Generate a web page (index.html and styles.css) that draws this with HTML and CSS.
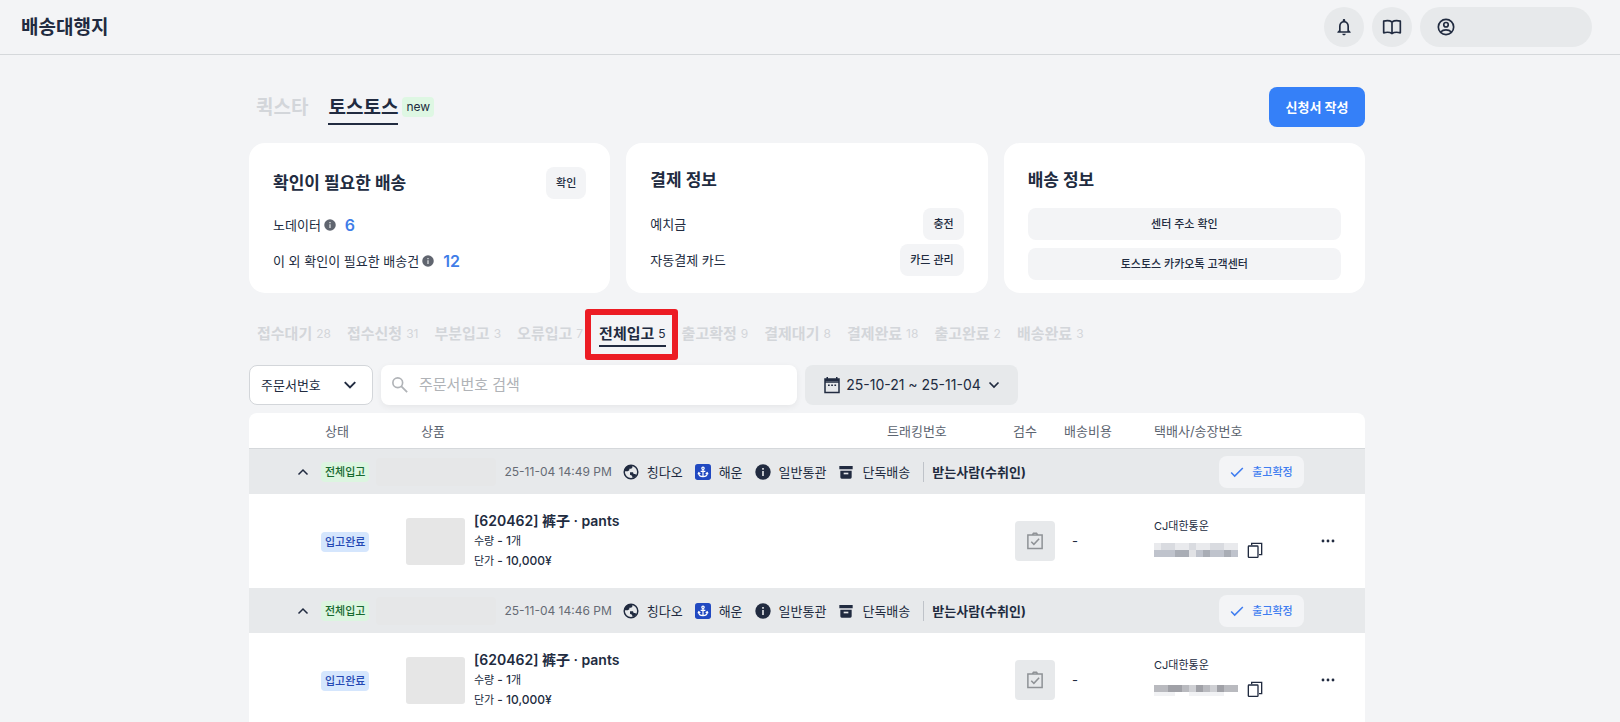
FILE: index.html
```html
<!DOCTYPE html>
<html lang="ko">
<head>
    <meta charset="UTF-8">
    <meta name="viewport" content="width=device-width, initial-scale=1.0">
    <title>배송대행지</title>
    <link rel="stylesheet" href="styles.css">
</head>
<body>
    <!-- Shared icons -->
    <svg class="sprite" aria-hidden="true">
        <symbol id="i-up" viewBox="0 0 24 24"><path d="M3 17l9-9 9 9" fill="none" stroke="currentColor" stroke-width="3"/></symbol>
        <symbol id="i-down" viewBox="0 0 24 24"><path d="M3 7l9 9 9-9" fill="none" stroke="currentColor" stroke-width="3.400"/></symbol>
        <symbol id="i-info" viewBox="0 0 24 24"><circle cx="12" cy="12" r="11.500" fill="currentColor"/><path d="M10.800 6h2.400v2.600h-2.400zM10.800 10.500h2.400V18h-2.400z" fill="#e7e9eb"/></symbol>
        <symbol id="i-globe" viewBox="0 0 24 24"><circle cx="12" cy="12" r="10.200" fill="none" stroke="currentColor" stroke-width="2.200"/><path d="M2 11c0-5 4-9 9-9.500l3 .5v3c0 1.500-1 2-2.500 2H9.500v2.500L7 11zM10.500 12.500h4.500l1 2.500h2.500l1.500 2c-1.500 2-3.500 3.500-5.500 4l-1-3.500-3-1.500z" fill="currentColor"/></symbol>
        <symbol id="i-anchor" viewBox="0 0 24 24"><rect width="24" height="24" rx="4" fill="#2149c1"/><g fill="none" stroke="#fff" stroke-width="1.800"><circle cx="12" cy="6.500" r="1.800"/><path d="M12 8.300V19M8.500 11h7M5.500 13.500c0 3.500 3 5.500 6.500 5.500s6.500-2 6.500-5.500M4.500 15.500l1.200-2.500 2.300 1.500M19.500 15.500l-1.200-2.500-2.300 1.500"/></g></symbol>
        <symbol id="i-box" viewBox="0 0 24 24"><path d="M2 3h20v5H2zM3.500 10h17v10a2 2 0 0 1-2 2h-13a2 2 0 0 1-2-2z" fill="currentColor"/><path d="M8.500 13h7v2.500h-7z" fill="#e7e9eb"/></symbol>
        <symbol id="i-check" viewBox="0 0 24 24"><path d="M2 13l6 6L22 5" fill="none" stroke="currentColor" stroke-width="2.600"/></symbol>
        <symbol id="i-task" viewBox="0 0 24 24"><path d="M2.500 4h19v18h-19zM8.500 4l1.500-2.500h4L15.500 4" fill="none" stroke="currentColor" stroke-width="2"/><path d="M7 13l3.500 3.500L17.500 9" fill="none" stroke="currentColor" stroke-width="2"/></symbol>
        <symbol id="i-copy" viewBox="0 0 24 24"><rect x="2" y="6" width="14.500" height="17" rx="1" fill="none" stroke="currentColor" stroke-width="2"/><path d="M7 5V2h15v17h-4" fill="none" stroke="currentColor" stroke-width="2"/></symbol>
        <symbol id="i-more" viewBox="0 0 24 24"><g fill="currentColor"><circle cx="6" cy="12" r="1.700"/><circle cx="12" cy="12" r="1.700"/><circle cx="18" cy="12" r="1.700"/></g></symbol>
    </svg>

    <header class="topbar">
        <h1 class="brand">배송대행지</h1>
        <div class="top-actions">
            <button class="round" aria-label="알림">
                <svg class="icon-20" viewBox="0 0 24 24"><path fill="currentColor" d="M12 22c1.100 0 2-.9 2-2h-4c0 1.100.9 2 2 2zm6-6v-5c0-3.070-1.630-5.640-4.500-6.320V4c0-.83-.67-1.500-1.500-1.500s-1.500.67-1.500 1.500v.68C7.640 5.360 6 7.920 6 11v5l-2 2v1h16v-1l-2-2zm-2 1H8v-6c0-2.480 1.510-4.500 4-4.500s4 2.020 4 4.500v6z"/></svg>
            </button>
            <button class="round" aria-label="가이드">
                <svg class="icon-20" viewBox="0 0 24 24"><path fill="none" stroke="currentColor" stroke-width="2" stroke-linejoin="round" d="M12 6C9.500 4.300 5 4.300 2 5v14c3-.8 7.500-.8 10 .8V6c2.500-1.700 7-1.700 10-1v14c-3-.8-7.500-.8-10 .8"/></svg>
            </button>
            <button class="profile" aria-label="내 계정">
                <svg class="icon-20" viewBox="0 0 24 24"><g fill="none" stroke="currentColor" stroke-width="2"><circle cx="12" cy="12" r="9.200"/><circle cx="12" cy="9.300" r="2.700"/><path d="M5.500 18c3.500-3.300 9.500-3.300 13 0"/></g></svg>
            </button>
        </div>
    </header>

    <main class="page">
        <div class="container">
            <div class="service-row">
                <nav class="services">
                    <a href="#" class="service">퀵스타</a>
                    <a href="#" class="service active">토스토스</a>
                    <span class="new">new</span>
                </nav>
                <button class="primary">신청서 작성</button>
            </div>

            <section class="cards">
                <div class="card">
                    <div class="card-head">
                        <h2>확인이 필요한 배송</h2>
                        <button class="soft">확인</button>
                    </div>
                    <div class="check-line">노데이터<svg class="icon-12"><use href="#i-info"/></svg><b>6</b></div>
                    <div class="check-line">이 외 확인이 필요한 배송건<svg class="icon-12"><use href="#i-info"/></svg><b>12</b></div>
                </div>
                <div class="card">
                    <h2>결제 정보</h2>
                    <div class="pay-lines">
                        <div class="pay-line">예치금<button class="soft">충전</button></div>
                        <div class="pay-line">자동결제 카드<button class="soft">카드 관리</button></div>
                    </div>
                </div>
                <div class="card">
                    <h2>배송 정보</h2>
                    <div class="ship-buttons">
                        <button class="soft">센터 주소 확인</button>
                        <button class="soft">토스토스 카카오톡 고객센터</button>
                    </div>
                </div>
            </section>

            <nav class="status-tabs">
                <a href="#">접수대기<span>28</span></a>
                <a href="#">접수신청<span>31</span></a>
                <a href="#">부분입고<span>3</span></a>
                <a href="#">오류입고<span>7</span></a>
                <a href="#" class="active">전체입고<span>5</span></a>
                <a href="#">출고확정<span>9</span></a>
                <a href="#">결제대기<span>8</span></a>
                <a href="#">결제완료<span>18</span></a>
                <a href="#">출고완료<span>2</span></a>
                <a href="#">배송완료<span>3</span></a>
            </nav>

            <div class="filters">
                <div class="select-box">
                    <select aria-label="검색 기준">
                        <option>주문서번호</option>
                    </select>
                    <svg class="icon-14"><use href="#i-down"/></svg>
                </div>
                <label class="search">
                    <svg class="icon-18" viewBox="0 0 24 24"><path fill="none" stroke="currentColor" stroke-width="2.400" d="M13.500 13.500l8 8"/><circle cx="9" cy="9" r="6.500" fill="none" stroke="currentColor" stroke-width="2.200"/></svg>
                    <input type="text" placeholder="주문서번호 검색" aria-label="주문서번호 검색">
                </label>
                <button class="period">
                    <svg class="icon-18" viewBox="0 0 18 18"><path fill="none" stroke="currentColor" stroke-width="1.500" d="M2 3h14v13.500H2zM2 6h14"/><path fill="currentColor" d="M2 3h14v2H2zM3.500 1H5v2H3.500zM13 1h1.500v2H13zM5 8.500h1.700V10H5zM8.200 8.500h1.700V10H8.200zM11.400 8.500h1.700V10h-1.700z"/></svg>
                    25-10-21 ~ 25-11-04
                    <svg class="icon-12"><use href="#i-down"/></svg>
                </button>
            </div>

            <table class="orders">
                <colgroup>
                    <col class="c-toggle"><col class="c-status"><col><col class="c-track">
                    <col class="c-inspect"><col class="c-cost"><col class="c-carrier"><col class="c-more">
                </colgroup>
                <thead>
                    <tr>
                        <th></th>
                        <th class="th-status">상태</th>
                        <th class="th-product">상품</th>
                        <th>트래킹번호</th>
                        <th class="th-inspect">검수</th>
                        <th class="th-cost">배송비용</th>
                        <th>택배사/송장번호</th>
                        <th></th>
                    </tr>
                </thead>
                <tbody>
                    <tr class="group">
                        <td colspan="8">
                            <div class="group-line">
                                <button class="toggle" aria-label="접기"><svg class="icon-12"><use href="#i-up"/></svg></button>
                                <span class="badge green">전체입고</span>
                                <span class="masked"></span>
                                <span class="date">25-11-04 14:49 PM</span>
                                <span class="tag"><svg class="icon-16"><use href="#i-globe"/></svg>칭다오</span>
                                <span class="tag"><svg class="icon-16"><use href="#i-anchor"/></svg>해운</span>
                                <span class="tag"><svg class="icon-16"><use href="#i-info"/></svg>일반통관</span>
                                <span class="tag"><svg class="icon-16"><use href="#i-box"/></svg>단독배송</span>
                                <span class="receiver">받는사람(수취인)</span>
                                <button class="confirm"><svg class="icon-14"><use href="#i-check"/></svg>출고확정</button>
                            </div>
                        </td>
                    </tr>
                    <tr class="item">
                        <td></td>
                        <td><span class="badge blue">입고완료</span></td>
                        <td>
                            <div class="product">
                                <div class="thumb"></div>
                                <div>
                                    <strong>[620462] 裤子 · pants</strong>
                                    <p>수량 <b>- 1</b>개</p>
                                    <p>단가 <b>- 10,000¥</b></p>
                                </div>
                            </div>
                        </td>
                        <td></td>
                        <td class="center"><button class="inspect" aria-label="검수"><svg class="icon-18"><use href="#i-task"/></svg></button></td>
                        <td>-</td>
                        <td>
                            <div class="carrier">CJ대한통운</div>
                            <div class="invoice">
                                <svg class="mosaic" viewBox="0 0 84 14"><path fill="#e9eaed" d="M0 0h84v7H0z"/><path fill="#d9dbe0" d="M7 0h14v7H7zM35 0h7v7h-7zM56 0h14v7H56z"/><path fill="#bfc3cc" d="M0 7h84v7H0z"/><path fill="#a9adb5" d="M21 7h14v7H21zM49 7h7v7h-7zM70 7h7v7h-7z"/><path fill="#e1e2e5" d="M35 7h7v7h-7z"/></svg>
                                <button class="plain" aria-label="복사"><svg class="icon-16"><use href="#i-copy"/></svg></button>
                            </div>
                        </td>
                        <td class="center"><button class="plain" aria-label="더보기"><svg class="icon-20"><use href="#i-more"/></svg></button></td>
                    </tr>
                    <tr class="group">
                        <td colspan="8">
                            <div class="group-line">
                                <button class="toggle" aria-label="접기"><svg class="icon-12"><use href="#i-up"/></svg></button>
                                <span class="badge green">전체입고</span>
                                <span class="masked"></span>
                                <span class="date">25-11-04 14:46 PM</span>
                                <span class="tag"><svg class="icon-16"><use href="#i-globe"/></svg>칭다오</span>
                                <span class="tag"><svg class="icon-16"><use href="#i-anchor"/></svg>해운</span>
                                <span class="tag"><svg class="icon-16"><use href="#i-info"/></svg>일반통관</span>
                                <span class="tag"><svg class="icon-16"><use href="#i-box"/></svg>단독배송</span>
                                <span class="receiver">받는사람(수취인)</span>
                                <button class="confirm"><svg class="icon-14"><use href="#i-check"/></svg>출고확정</button>
                            </div>
                        </td>
                    </tr>
                    <tr class="item">
                        <td></td>
                        <td><span class="badge blue">입고완료</span></td>
                        <td>
                            <div class="product">
                                <div class="thumb"></div>
                                <div>
                                    <strong>[620462] 裤子 · pants</strong>
                                    <p>수량 <b>- 1</b>개</p>
                                    <p>단가 <b>- 10,000¥</b></p>
                                </div>
                            </div>
                        </td>
                        <td></td>
                        <td class="center"><button class="inspect" aria-label="검수"><svg class="icon-18"><use href="#i-task"/></svg></button></td>
                        <td>-</td>
                        <td>
                            <div class="carrier">CJ대한통운</div>
                            <div class="invoice">
                                <svg class="mosaic" viewBox="0 0 84 14"><path fill="#b9babf" d="M0 3h84v7H0z"/><path fill="#a0a1a7" d="M14 3h14v7H14zM42 3h7v7h-7zM63 3h7v7h-7z"/><path fill="#cfd0d4" d="M35 3h7v7h-7zM56 3h7v7h-7z"/><path fill="#f1f2f4" d="M0 10h21v4H0zM35 10h35v4H35z"/></svg>
                                <button class="plain" aria-label="복사"><svg class="icon-16"><use href="#i-copy"/></svg></button>
                            </div>
                        </td>
                        <td class="center"><button class="plain" aria-label="더보기"><svg class="icon-20"><use href="#i-more"/></svg></button></td>
                    </tr>
                </tbody>
            </table>
        </div>
    </main>
</body>
</html>
```

FILE: styles.css
```css
* {
    box-sizing: border-box;
}
body {
    margin: 0;
    font-family: Inter, "Noto Sans CJK KR", sans-serif;
    font-size: 13px;
    line-height: 20px;
    color: #212b40;
    background-color: #f3f4f6;
}
h1, h2, p {
    margin: 0;
}
a {
    color: inherit;
    text-decoration: none;
}
button, input, select {
    font: inherit;
    color: inherit;
}
button {
    display: flex;
    align-items: center;
    justify-content: center;
    padding: 0;
    border: none;
    background: none;
    cursor: pointer;
}
svg {
    display: block;
    flex: none;
}
.sprite {
    display: none;
}
.icon-12 { width: 12px; height: 12px; }
.icon-14 { width: 14px; height: 14px; }
.icon-16 { width: 16px; height: 16px; }
.icon-18 { width: 18px; height: 18px; }
.icon-20 { width: 20px; height: 20px; }

/* Top bar */
.topbar {
    display: flex;
    align-items: center;
    justify-content: space-between;
    padding: 7px 28px 7px 21px;
    border-bottom: 1px solid #d5d8db;
}
.brand {
    padding-top: 2px;
    font-size: 19px;
    font-weight: 600;
}
.top-actions {
    display: flex;
    gap: 8px;
}
.round, .profile {
    height: 40px;
    border-radius: 20px;
    background-color: #e7e9eb;
}
.round {
    width: 40px;
}
.profile {
    width: 172px;
    justify-content: flex-start;
    padding: 0 16px;
}

.page {
    padding: 32px 6px 0 0;
}
.container {
    max-width: 1116px;
    margin: 0 auto;
}
.service-row {
    display: flex;
    align-items: center;
    justify-content: space-between;
    height: 40px;
    margin-bottom: 16px;
}
.services {
    display: flex;
    align-items: center;
    padding-left: 7px;
}
.service {
    margin-right: 20px;
    padding: 8px 0 4px;
    font-size: 19px;
    line-height: 22px;
    font-weight: 700;
    color: #d3d6da;
    border-bottom: 2px solid transparent;
}
.service.active {
    margin-right: 4px;
    color: #212b40;
    border-color: #212b40;
}
.new {
    padding: 0 4px;
    border-radius: 4px;
    font-size: 12px;
    background-color: #def7e3;
}
.primary {
    width: 96px;
    height: 40px;
    border-radius: 8px;
    font-weight: 700;
    color: #fff;
    background-color: #3580f8;
}

/* Cards */
.cards {
    display: grid;
    grid-template-columns: repeat(3, 1fr);
    gap: 16px;
    margin-bottom: 16px;
}
.card {
    min-height: 150px;
    padding: 24px 24px 12px;
    border-radius: 16px;
    background-color: #fff;
}
.card h2 {
    font-size: 17px;
    line-height: 26px;
    font-weight: 700;
}
.card-head {
    display: flex;
    align-items: center;
    justify-content: space-between;
    margin-bottom: 8px;
}
.soft {
    height: 32px;
    padding: 0 10px;
    border-radius: 8px;
    font-size: 11px;
    font-weight: 500;
    background-color: #f3f4f6;
}
.check-line {
    display: flex;
    align-items: center;
    height: 36px;
}
.check-line svg {
    margin: 0 9px 0 3px;
    color: #60656f;
}
.check-line b {
    font-size: 16px;
    font-weight: 600;
    color: #3f7de8;
}
.pay-lines, .ship-buttons {
    display: grid;
    gap: 4px;
    margin-top: 15px;
}
.ship-buttons {
    gap: 8px;
}
.pay-line {
    display: flex;
    align-items: center;
    justify-content: space-between;
}

/* Status tabs */
.status-tabs {
    display: flex;
    gap: 16px;
    padding: 13px 8px 18px;
}
.status-tabs a {
    position: relative;
    display: flex;
    align-items: center;
    gap: 4px;
    padding: 2px 0 1px;
    font-size: 15px;
    font-weight: 700;
    color: #d3d6da;
    border-bottom: 2px solid transparent;
}
.status-tabs span {
    font-size: 12px;
    font-weight: 400;
}
.status-tabs .active {
    color: #212b40;
    border-color: #212b40;
}
.status-tabs .active::after {
    content: "";
    position: absolute;
    inset: -13px -12px -15px -14px;
    border: 6px solid #ec1c24;
    border-radius: 3px;
    z-index: 1;
}

/* Filters */
.filters {
    display: flex;
    gap: 8px;
    height: 40px;
    margin-bottom: 8px;
}
.select-box {
    position: relative;
    width: 124px;
}
.select-box select {
    width: 100%;
    height: 100%;
    padding: 0 11px;
    border: 1px solid #d3d6da;
    border-radius: 8px;
    appearance: none;
    background-color: #fff;
}
.select-box svg {
    position: absolute;
    top: 13px;
    right: 16px;
    pointer-events: none;
}
.search {
    display: flex;
    align-items: center;
    gap: 10px;
    width: 416px;
    padding: 0 10px;
    border-radius: 8px;
    color: #b0b3b7;
    background-color: #fff;
    box-shadow: 0 2px 6px rgba(0, 0, 0, 0.06);
}
.search input {
    flex: 1;
    min-width: 0;
    padding: 0;
    border: none;
    outline: none;
    font-size: 15px;
    color: #212b40;
    background: none;
}
.search input::placeholder {
    color: #b0b3b7;
}
.period {
    gap: 5px;
    width: 213px;
    border-radius: 8px;
    font-size: 14px;
    background-color: #e7e9eb;
}
.period .icon-12 {
    margin-left: 2px;
}

/* Orders table */
.orders {
    width: 100%;
    table-layout: fixed;
    border-collapse: separate;
    border-spacing: 0;
    border-radius: 8px 8px 0 0;
    background-color: #fff;
}
.c-toggle { width: 64px; }
.c-status { width: 85px; }
.c-track { width: 127px; }
.c-inspect { width: 58px; }
.c-cost { width: 82px; }
.c-carrier { width: 144px; }
.c-more { width: 75px; }
.orders th {
    height: 36px;
    padding: 0 8px;
    font-weight: 400;
    text-align: left;
    white-space: nowrap;
    color: #5c6470;
    border-bottom: 1px solid #d5d8db;
}
.orders .th-status {
    padding-left: 12px;
}
.orders .th-product {
    padding-left: 23px;
}
.orders .th-inspect {
    padding-left: 7px;
}
.orders .th-cost {
    padding: 0;
}
.orders td {
    padding: 0 8px;
}
.orders .center {
    padding: 0;
    text-align: center;
}
.center button {
    margin: 0 auto;
}
.orders .group td {
    height: 45px;
    padding: 0;
    background-color: #e7e9eb;
}
.item td {
    height: 94px;
}
.group-line {
    display: flex;
    align-items: center;
    padding: 0 61px 0 44px;
    white-space: nowrap;
}
.toggle {
    width: 20px;
    height: 20px;
    margin-right: 8px;
}
.badge {
    display: inline-block;
    padding: 0 4px;
    border-radius: 4px;
    font-size: 11px;
    font-weight: 500;
    white-space: nowrap;
}
.green {
    color: #17692f;
    background-color: #dcf5e0;
}
.blue {
    color: #2549b4;
    background-color: #d5e6fd;
}
.masked {
    width: 120px;
    height: 28px;
    margin: 0 8px 0 7px;
    border-radius: 4px;
    background-color: #e6e7e8;
}
.date {
    margin-right: 11px;
    font-size: 12px;
    color: #666b75;
}
.tag {
    display: flex;
    align-items: center;
    gap: 8px;
    margin-right: 12px;
}
.receiver {
    margin-left: 1px;
    padding-left: 8px;
    border-left: 1px solid #bfc3c9;
    font-weight: 700;
}
.confirm {
    gap: 8px;
    width: 85px;
    height: 32px;
    margin-left: auto;
    border-radius: 8px;
    font-size: 11px;
    font-weight: 500;
    color: #3f7df0;
    background-color: #f3f4f6;
}
.product {
    display: flex;
    align-items: center;
    gap: 9px;
}
.thumb {
    width: 59px;
    height: 47px;
    border-radius: 3px;
    background-color: #e6e6e6;
}
.product strong {
    display: block;
    font-size: 14px;
    font-weight: 600;
}
.product p {
    font-size: 11px;
}
.product b {
    font-size: 12px;
    font-weight: 500;
}
.inspect {
    width: 40px;
    height: 40px;
    border-radius: 4px;
    color: #8f9296;
    background-color: #e7e9eb;
}
.carrier {
    margin-bottom: 6px;
    font-size: 11px;
}
.invoice {
    display: flex;
    align-items: center;
    gap: 9px;
    padding-bottom: 8px;
}
.mosaic {
    width: 84px;
    height: 14px;
}
```
